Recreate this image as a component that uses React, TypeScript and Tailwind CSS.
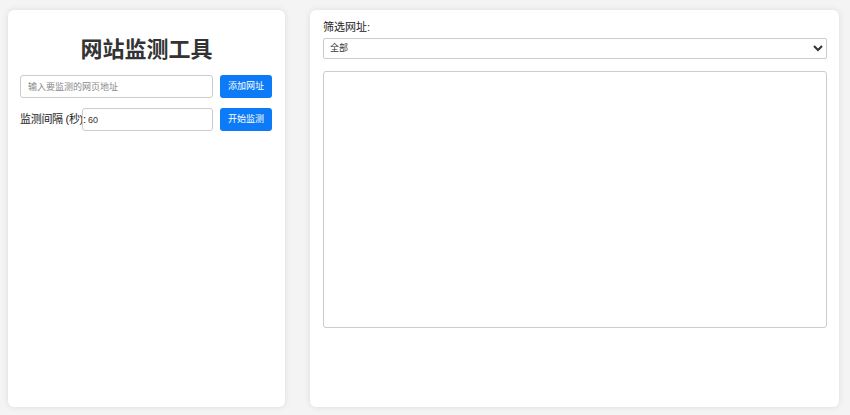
export default function App() {
  const f = { fontFamily: '"Liberation Sans", "Noto Sans CJK SC", sans-serif' };
  return (
    <div style={f} className="w-[850px] h-[415px] bg-[#f4f4f4] flex gap-[25px] pl-[8px] pt-[10px] text-[#333]">
      <div className="w-[277px] h-[397px] bg-white rounded-md shadow-[0_0_6px_rgba(0,0,0,0.1)] px-[12px] pt-[26px]">
        <h1 className="text-[22px] font-bold text-center leading-[28px] mb-[11px]">网站监测工具</h1>
        <div className="flex gap-[7px] mb-[10px]">
          <input placeholder="输入要监测的网页地址" className="w-[193px] h-[23px] border border-[#ccc] rounded-[3px] px-[7px] text-[9px] placeholder:text-[#888]" />
          <button className="w-[52px] h-[23px] bg-[#0d7bf7] text-white text-[9px] rounded-[3px]">添加网址</button>
        </div>
        <div className="flex items-center">
          <span className="text-[11px] text-[#222] whitespace-nowrap w-[62px] shrink-0 tracking-[-0.3px]">监测间隔 (秒):</span>
          <input defaultValue="60" className="w-[131px] shrink-0 h-[23px] border border-[#ccc] rounded-[3px] px-[5px] text-[9px]" />
          <button className="w-[52px] shrink-0 ml-[7px] h-[23px] bg-[#0d7bf7] text-white text-[9px] rounded-[3px]">开始监测</button>
        </div>
      </div>
      <div className="w-[529px] h-[397px] bg-white rounded-md shadow-[0_0_6px_rgba(0,0,0,0.1)] px-[13px] pt-[11px]">
        <div className="text-[11px] text-[#222] leading-[13px]">筛选网址:</div>
        <select className="w-[504px] h-[21px] border border-[#ccc] rounded-[2px] text-[9px] px-[2px] bg-white">
          <option>全部</option>
        </select>
        <div className="w-[504px] h-[257px] mt-[12px] border border-[#ccc] rounded-[3px]"></div>
      </div>
    </div>
  );
}
